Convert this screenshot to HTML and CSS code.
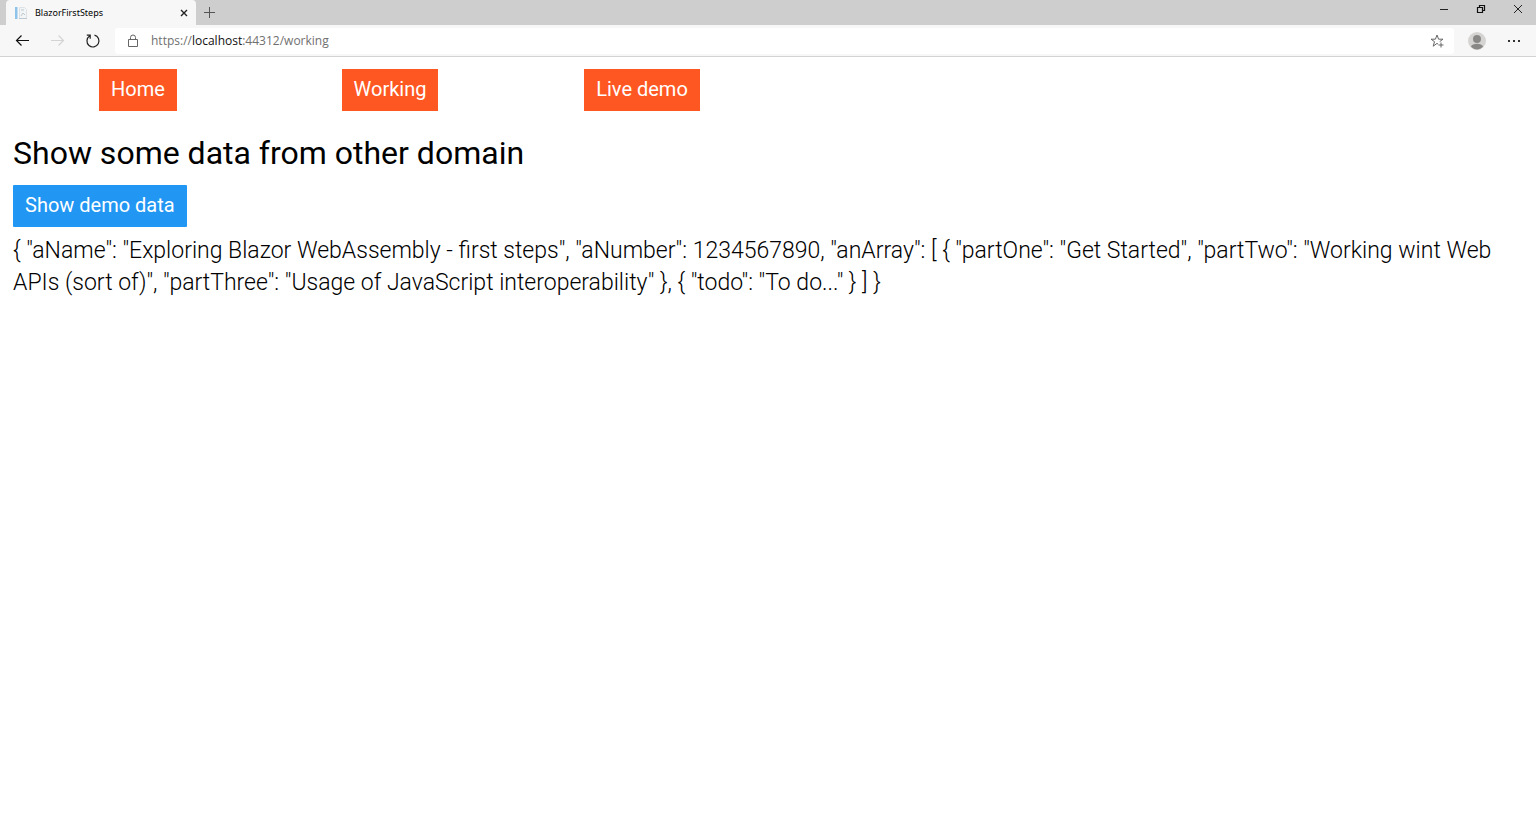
FILE: index.html
```html
<!DOCTYPE html>
<html lang="en">
<head>
<meta charset="utf-8">
<title>BlazorFirstSteps</title>
<link rel="stylesheet" href="styles.css">
</head>
<body>
<header class="browser">
  <div class="tabbar">
    <div class="tab">
      <svg class="favicon" width="14" height="14" viewBox="0 0 14 14"><path d="M1 1h2.500v12H1z" fill="#8fc4ea"/><path d="M5.500 1.500h5l2 2v9h-7z" fill="#f2f4f6" stroke="#dde2e6"/><path d="M7 10l2-3 2 2M7 4h3M5 12.500h8" fill="none" stroke="#bcc8d2"/></svg>
      <span class="tab-title">BlazorFirstSteps</span>
      <button class="icon tab-close" aria-label="Close tab"><svg width="8" height="8" viewBox="0 0 8 8"><path d="M1 1l6 6M7 1l-6 6" stroke="#222" stroke-width="1.400"/></svg></button>
    </div>
    <button class="icon new-tab" aria-label="New tab"><svg width="12" height="12" viewBox="0 0 12 12"><path d="M5.500 0v11M0 5.500h11" stroke="#555"/></svg></button>
    <div class="window-controls">
      <button class="icon" aria-label="Minimize"><svg width="10" height="10" viewBox="0 0 10 10"><path d="M1 5.500h8" stroke="#222"/></svg></button>
      <button class="icon" aria-label="Restore"><svg width="10" height="10" viewBox="0 0 10 10"><path d="M1.500 3.500h5v5h-5zM3.500 3V1.500h5v5H7" fill="none" stroke="#111" stroke-width="1.200"/></svg></button>
      <button class="icon" aria-label="Close"><svg width="10" height="10" viewBox="0 0 10 10"><path d="M1 1l8 8M9 1L1 9" stroke="#222"/></svg></button>
    </div>
  </div>
  <div class="toolbar">
    <button class="icon tool" aria-label="Back"><svg width="16" height="16" viewBox="0 0 16 16"><path d="M14 7.500H1.500M6.500 2.500L1.500 7.500 6.500 12.500" fill="none" stroke="#111" stroke-width="1.200"/></svg></button>
    <button class="icon tool" aria-label="Forward" disabled><svg width="16" height="16" viewBox="0 0 16 16"><path d="M1 7.500H13.500M8.500 2.500L13.500 7.500 8.500 12.500" fill="none" stroke="#d4d4d4" stroke-width="1.200"/></svg></button>
    <button class="icon tool" aria-label="Refresh"><svg width="16" height="16" viewBox="0 0 16 16"><path d="M9.500 2.200A6 6 0 1 1 4.500 3.100M1.800 2.200H5.200V5.800" fill="none" stroke="#222" stroke-width="1.200"/></svg></button>
    <div class="address">
      <svg width="12" height="14" viewBox="0 0 12 14"><path d="M1.500 5.500h9v7h-9zM3.500 5.500V3.500a2.500 2.500 0 0 1 5 0v2" fill="none" stroke="#666"/></svg>
      <a class="url" href="#">https://<span class="host">localhost</span>:44312/working</a>
      <button class="icon" aria-label="Add to favorites"><svg width="14" height="14" viewBox="0 0 14 14"><path d="M8.200 10.200L7 9.400l-3.800 2.800 1.300-4.500L1 5.200h4.400L7 1l1.600 4.200H13L9.700 7.600M11 8.500v5M8.500 11H13.500" fill="none" stroke="#666"/></svg></button>
    </div>
    <button class="icon profile" aria-label="Profile"><svg width="18" height="18" viewBox="0 0 18 18"><circle cx="9" cy="9" r="9" fill="#d6d4d2"/><circle cx="9" cy="7" r="4" fill="#8a8886"/><path d="M3 14.500C4 10.800 14 10.800 15 14.500 12 18.500 6 18.500 3 14.500z" fill="#8a8886"/></svg></button>
    <button class="icon more" aria-label="Settings and more"><svg width="12" height="4" viewBox="0 0 12 4"><path d="M0 1h2v2H0zM5 1h2v2H5zM10 1h2v2h-2z" fill="#333"/></svg></button>
  </div>
</header>
<nav class="menu">
  <div class="menu-cell"><a class="button orange" href="#">Home</a></div>
  <div class="menu-cell"><a class="button orange" href="#">Working</a></div>
  <div class="menu-cell"><a class="button orange" href="#">Live demo</a></div>
</nav>
<main class="content">
  <h1 class="heading">Show some data from other domain</h1>
  <button class="button blue">Show demo data</button>
  <p class="result">{ "aName": "Exploring Blazor WebAssembly - first steps", "aNumber": 1234567890, "anArray": [ { "partOne": "Get Started", "partTwo": "Working wint Web APIs (sort of)", "partThree": "Usage of JavaScript interoperability" }, { "todo": "To do..." } ] }</p>
</main>
</body>
</html>
```
FILE: styles.css
```css
* { box-sizing: border-box; }
body { margin: 0; background: #fff; color: #000; font-family: Roboto, sans-serif; }
.browser { font-family: "Open Sans", sans-serif; background: #f7f7f7; border-bottom: 1px solid #d2d2d2; }
.icon { display: flex; align-items: center; justify-content: center; flex: none; padding: 0; border: 0; background: none; }
.tabbar { display: flex; align-items: center; height: 25px; padding-left: 6px; background: #cecece; }
.tab { display: flex; align-items: center; gap: 7px; width: 190px; height: 25px; padding: 0 8px 0 8px; background: #f7f7f7; border-radius: 4px 4px 0 0; }
.tab-title { flex: 1; font-family: "Noto Sans", sans-serif; font-size: 9px; line-height: 14px; }
.new-tab { width: 28px; height: 24px; }
.window-controls { display: flex; margin-left: auto; }
.window-controls .icon { width: 37px; height: 18px; margin-bottom: 7px; }
.toolbar { display: flex; align-items: center; height: 31px; padding-left: 5px; }
.tool { width: 35px; height: 30px; }
.address { display: flex; flex: 1; align-items: center; gap: 12px; height: 26px; margin-left: 5px; padding: 0 10px 0 12px; background: #fff; border-radius: 3px; }
.url { flex: 1; color: #707070; font-size: 12px; line-height: 18px; text-decoration: none; }
.host { color: #111; }
.profile { width: 46px; height: 30px; }
.more { width: 28px; height: 30px; margin-right: 8px; }
.menu { display: grid; grid-template-columns: repeat(3, 1fr); width: 50%; padding: 12px 0 0 12px; }
.menu-cell { display: flex; justify-content: center; }
.button { display: block; padding: 4px 12px 6px; border: 0; color: #fff; font-family: Roboto, sans-serif; font-size: 20px; line-height: 32px; text-decoration: none; }
.orange { background: #ff5722; }
.blue { background: #2196f3; border-radius: 1px; }
.content { padding: 18px 13px; }
.heading { margin: 0 0 8px; font-size: 32px; font-weight: 400; line-height: 48px; }
.result { margin: 8px 0 0; font-size: 23px; font-weight: 300; line-height: 32px; }
```
